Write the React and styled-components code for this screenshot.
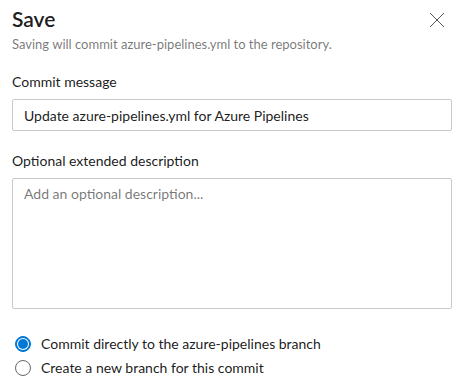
import styled, { createGlobalStyle } from "styled-components";
import { useState } from "react";

const GlobalStyle = createGlobalStyle`
    body {
        margin: 0;
        background: #ffffff;
        font-family: "Segoe UI", "Lato", "Open Sans", sans-serif;
        color: rgba(0, 0, 0, 0.9);
    }
`;

const Panel = styled.div`
    width: 461px;
    height: 391px;
    box-sizing: border-box;
    padding: 4px 12px 0 12px;
    display: flex;
    flex-direction: column;
`;

const Header = styled.div`
    display: flex;
    justify-content: space-between;
    align-items: flex-start;
`;

const Titles = styled.div`
    display: flex;
    flex-direction: column;
`;

const Title = styled.h1`
    margin: 0;
    font-size: 21px;
    font-weight: 600;
    line-height: 30px;
    color: rgba(0, 0, 0, 0.9);
`;

const Subtitle = styled.div`
    font-size: 13px;
    line-height: 20px;
    color: rgba(0, 0, 0, 0.55);
`;

const Close = styled.button`
    border: none;
    background: none;
    padding: 0;
    margin: 8px 4px 0 0;
    width: 16px;
    height: 16px;
    cursor: pointer;
`;

const Field = styled.div`
    display: flex;
    flex-direction: column;
    margin-top: ${(p) => p.$top}px;
`;

const Label = styled.label`
    font-size: 14px;
    line-height: 20px;
    margin-bottom: 7px;
    color: rgba(0, 0, 0, 0.9);
`;

const TextInput = styled.input`
    box-sizing: border-box;
    width: 440px;
    height: 32px;
    border: 1px solid #c8c8c8;
    border-radius: 2px;
    padding: 0 11px;
    font-family: inherit;
    font-size: 14px;
    color: rgba(0, 0, 0, 0.9);
    outline: none;
`;

const TextArea = styled.textarea`
    box-sizing: border-box;
    width: 440px;
    height: 131px;
    border: 1px solid #c8c8c8;
    border-radius: 2px;
    padding: 5px 11px;
    font-family: inherit;
    font-size: 14px;
    line-height: 20px;
    resize: none;
    outline: none;
    &::placeholder {
        color: rgba(0, 0, 0, 0.55);
    }
`;

const RadioGroup = styled.div`
    display: flex;
    flex-direction: column;
    gap: 4px;
    margin-top: 25px;
    padding-left: 3px;
`;

const RadioRow = styled.label`
    display: flex;
    align-items: center;
    gap: 10px;
    font-size: 14px;
    line-height: 20px;
    cursor: pointer;
`;

const Dot = styled.span`
    box-sizing: border-box;
    width: 16px;
    height: 16px;
    border-radius: 50%;
    border: 1px solid ${(p) => (p.$on ? "#0078d4" : "#666666")};
    background: ${(p) => (p.$on ? "#0078d4" : "#ffffff")};
    display: flex;
    align-items: center;
    justify-content: center;
    &::after {
        content: "";
        width: 10px;
        height: 10px;
        border-radius: 50%;
        background: ${(p) => (p.$on ? "#0078d4" : "transparent")};
        box-sizing: border-box;
        box-shadow: ${(p) => (p.$on ? "0 0 0 1px #ffffff" : "none")};
    }
`;

function Radio({ on, children, onPick }) {
    return (
        <RadioRow onClick={onPick}>
            <Dot $on={on} />
            {children}
        </RadioRow>
    );
}

export default function App() {
    const [branch, setBranch] = useState("direct");

    return (
        <>
            <GlobalStyle />
            <Panel>
                <Header>
                    <Titles>
                        <Title>Save</Title>
                        <Subtitle>Saving will commit azure-pipelines.yml to the repository.</Subtitle>
                    </Titles>
                    <Close aria-label="Close">
                        <svg width="16" height="16" viewBox="0 0 16 16">
                            <path d="M1 1L15 15M15 1L1 15" stroke="#555" strokeWidth="1" fill="none" />
                        </svg>
                    </Close>
                </Header>
                <Field $top={18}>
                    <Label>Commit message</Label>
                    <TextInput defaultValue="Update azure-pipelines.yml for Azure Pipelines" />
                </Field>
                <Field $top={20}>
                    <Label>Optional extended description</Label>
                    <TextArea placeholder="Add an optional description..." />
                </Field>
                <RadioGroup>
                    <Radio on={branch === "direct"} onPick={() => setBranch("direct")}>
                        Commit directly to the azure-pipelines branch
                    </Radio>
                    <Radio on={branch === "new"} onPick={() => setBranch("new")}>
                        Create a new branch for this commit
                    </Radio>
                </RadioGroup>
            </Panel>
        </>
    );
}
